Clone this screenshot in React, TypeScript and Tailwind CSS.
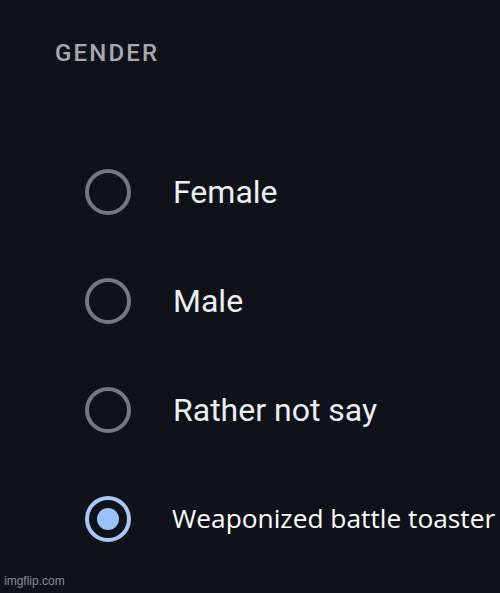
const options = [
  { label: "Female", checked: false },
  { label: "Male", checked: false },
  { label: "Rather not say", checked: false },
];

const Radio = ({ checked }: { checked: boolean }) =>
  checked ? (
    <span className="flex h-[46px] w-[46px] shrink-0 items-center justify-center rounded-full border-[4px] border-[#a8c7fa]">
      <span className="h-[22px] w-[22px] rounded-full bg-[#9cc0f9]" />
    </span>
  ) : (
    <span className="h-[46px] w-[46px] shrink-0 rounded-full border-[4px] border-[#76787e]" />
  );

export default function App() {
  return (
    <div className="relative h-[593px] w-[500px] overflow-hidden bg-[#10121a]">
      <div className="pl-[55px] pt-[38px] font-['Roboto',sans-serif] text-[24px] font-medium leading-[30px] tracking-[0.09em] text-[#a6a9b0]">
        GENDER
      </div>

      <div className="flex flex-col gap-[63px] pl-[85px] pt-[101px]">
        {options.map((o) => (
          <div key={o.label} className="flex h-[46px] items-center gap-[42px]">
            <Radio checked={o.checked} />
            <span className="font-['Roboto',sans-serif] text-[32px] leading-none text-[#eceef2]">
              {o.label}
            </span>
          </div>
        ))}
        <div className="flex h-[46px] items-center gap-[41px]">
          <Radio checked />
          <span className="-mt-[2px] whitespace-nowrap font-['Open_Sans',sans-serif] text-[26.3px] leading-none text-white">
            Weaponized battle toaster
          </span>
        </div>
      </div>

      <div className="absolute bottom-[3px] left-[4px] font-['Liberation_Sans',sans-serif] text-[12px] text-[#8b8d93]">
        imgflip.com
      </div>
    </div>
  );
}
